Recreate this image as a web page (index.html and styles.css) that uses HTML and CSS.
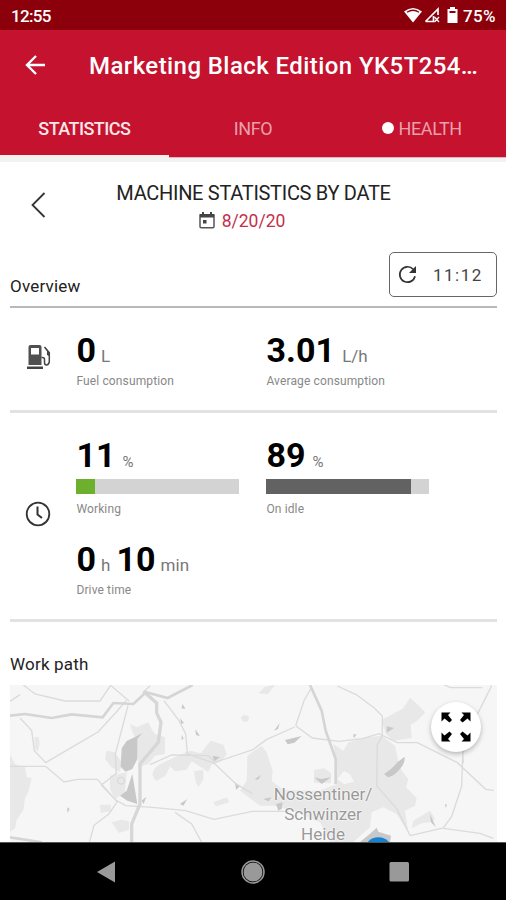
FILE: index.html
```html
<!DOCTYPE html>
<html lang="en">
<head>
<meta charset="utf-8">
<title>Machine statistics</title>
<link rel="stylesheet" href="styles.css">
</head>
<body>
<div class="status">
  <span class="clock">12:55</span>
  <svg class="status-icons" width="58" height="20" viewBox="0 0 58 20" fill="#fff">
    <path d="M0 5.500Q9 -1.500 18 5.500L9 16.500Z"/><path d="M3 6.200Q9 2.300 15 6.200" fill="none" stroke="#8b000b" stroke-width="1.300"/>
    <path d="M21.500 15.500L34 3V9M21.500 15.500H29.500V10" fill="none" stroke="#fff" stroke-width="1.700"/><path d="M30.500 11l4.500 5M35 11l-4.500 5" stroke="#fff" stroke-width="1.300"/>
    <path d="M46 1h5v2h2.500v14h-10V3H46z"/><path d="M45.500 5h6v2h-6z" fill="#8b000b"/>
  </svg>
  <span class="battery">75%</span>
</div>
<header class="header">
  <div class="titlebar">
    <svg class="back" width="22" height="20" viewBox="0 0 22 20" fill="none" stroke="#fff" stroke-width="2.400"><path d="M20 10H2M11 1L2 10l9 9"/></svg>
    <h1 class="title">Marketing Black Edition YK5T254…</h1>
  </div>
  <nav class="tabs">
    <span class="tab tab-active">STATISTICS</span>
    <span class="tab">INFO</span>
    <span class="tab tab-health"><i class="dot"></i>HEALTH</span>
  </nav>
</header>
<main class="content">
  <section class="datebar">
    <svg class="prev" width="15" height="26" viewBox="0 0 15 26" fill="none" stroke="#333" stroke-width="1.800"><path d="M13.500 1L1.500 13l12 12"/></svg>
    <div class="dateinfo">
      <h2 class="heading">MACHINE STATISTICS BY DATE</h2>
      <div class="date">
        <svg width="16" height="17" viewBox="0 0 16 17"><path d="M1 3h14v11.500q0 1.200-1.200 1.200H2.200Q1 15.700 1 14.500z" fill="none" stroke="#555" stroke-width="1.500"/><path d="M1 2h14v3.500H1zM3 0h2v3H3zM11 0h2v3h-2z" fill="#444"/><path d="M4 8h3.500v3.500H4z" fill="#444"/></svg>
        <span class="date-text">8/20/20</span>
      </div>
    </div>
  </section>
  <section class="overview">
    <h3 class="subheading sub-overview">Overview</h3>
    <button class="refresh">
      <svg width="19" height="19" viewBox="0 0 19 19"><path d="M15.200 4.300A7.700 7.700 0 1 0 17 11.200" fill="none" stroke="#333" stroke-width="1.700"/><path d="M18 1v7h-7z" fill="#333"/></svg>
      <span class="time">11:12</span>
    </button>
  </section>
  <section class="row row-fuel">
    <svg class="fuel" width="24" height="25" viewBox="0 0 24 25"><path fill-rule="evenodd" d="M3.500 0h9q2 0 2 2v18h-13V2q0-2 2-2zM4 3v6.500h8V3z" fill="#505050"/><path d="M0 21.500h16v2.500H0z" fill="#444"/><path d="M14.500 12.500h1q2 0 2 2v3q0 2.500 2 2.500t2.800-3V8L17.500 2" fill="none" stroke="#444" stroke-width="1.500"/><path d="M18 2l5 5.500v4l-3-1.500V6z" fill="#444"/></svg>
    <div class="cells">
      <div class="cell"><div class="value"><b>0</b><span class="unit">L</span></div><div class="label">Fuel consumption</div></div>
      <div class="cell"><div class="value"><b>3.01</b><span class="unit u-lh">L/h</span></div><div class="label">Average consumption</div></div>
    </div>
  </section>
  <section class="row row-time">
    <svg class="timeicon" width="26" height="26" viewBox="0 0 26 26" fill="none" stroke="#333" stroke-width="1.800"><circle cx="13" cy="13" r="11.300"/><path d="M12.500 5.500v8l4.500 3.500" stroke-width="2"/></svg>
    <div class="cells">
      <div class="cell"><div class="value"><b>11</b><span class="unit pct">%</span></div><div class="bar"><div class="fill green" style="width:11.500%"></div></div><div class="label">Working</div></div>
      <div class="cell"><div class="value"><b>89</b><span class="unit pct">%</span></div><div class="bar"><div class="fill gray" style="width:89%"></div></div><div class="label">On idle</div></div>
      <div class="cell drive"><div class="value"><b>0</b><span class="unit">h</span><b class="ten">10</b><span class="unit">min</span></div><div class="label">Drive time</div></div>
    </div>
  </section>
  <h3 class="subheading sub-path">Work path</h3>
  <div class="map">
    <svg class="mapdraw" viewBox="30 13 1461 471" preserveAspectRatio="none">
      <path fill="#f6f6f6" d="M30 0h1470v490H30z"/>
      <g fill="#e8e8e8">
        <path d="M30 220l15 30 30 10 5 30 15 3-10 40-10 20-5 35-20 30-5 25-15 10z"/>
        <path d="M390 130l20 10 35-15 10 20 10 15 30 10v50l-30 5-20 25-30 10-5-80-10-20zM320 210l25 5 20 30-5 30-25-15-20-25zM103 170l12-2 4 20-5 25-10-10zM330 285l50-10-5 60-30 20-15-30zM300 372h32v20l-30 5zM335 425l30-8 22 5v25l-30 10z"/>
        <path d="M457 282q5-25 30-35l60-28 25-9 30 8 30-38 38 12 10 28-15 22-30 10-10 22-50-32-15 25-35 5-15-15-15 30-28 14zM582 272l28-5v30l-15 22-8-15zM640 365l40-15 8 15-40 12zM722 112l10-10 15 5-2 15-15 2z"/>
        <path d="M742 225L785 195L800 215L818 270L815 300L850 328L960 330L1010 310L1012 270L1000 190L1030 210L1045 185L1100 170L1145 165L1185 195L1195 240L1205 270L1225 295L1218 320L1250 352L1245 375L1215 390L1225 455L1190 400L1150 380L1115 395L1110 440L1060 484H990L960 425L900 400L830 375L780 375L720 330L740 300Z"/>
        <path d="M1145 118l65-35 20-32 22 20 24 24-24 25-20 12 3 40-53 8-25-20zM1240 420l50-30 15 25-15 10-25 3-30 15zM775 38l20-20 30-5-22 28zM942 268l30-5 22 15-2 30-50-2z"/>
      </g>
      <path d="M1012 295l20-24 18 10 12 22-30 8z" fill="#f6f6f6"/>
      <g fill="#c9c8c9">
        <path d="M427 157l-15 18v60l-15 30-20 8-15-15 3-55 15-22 25-12zM397 280l5 30 10 60-30-10-22-15 20-15z"/>
        <path d="M548 70l8 15-12-2zM540 112l12 15-8 3zM586 146l14 20-12-3zM545 162l6 12-6 4zM638 225l22 5-18 12zM705 305l15 12-12 10zM425 360l14-12-8 22zM540 370l22-15-12 20zM202 380l7 5-7 12z"/>
        <path d="M855 178l50-12-22 20-20 5zM943 290l20 5 30-5-28 20zM1152 280q25-15 40-35l22-17q2 20-15 38-15 20-35 24zM1160 137l22 5-22 14zM822 150l17-23-5 18zM1060 160l10 2-9 10zM764 296l20-14-10 15zM1290 400l18 40-15-15zM1335 370l6 2-4 10zM1080 484l30-25 20-18 5 12 38 12-3 19zM790 355l25-5-10 12zM828 370l20-5-3 20-10 5z"/>
      </g>
      <g fill="none" stroke="#dbdbdb" stroke-width="4">
        <path d="M70 13l35 27 90 21h105l32-47 55 47M60 112l35 38 8 60 34 36 97-57 60-35 55-60 30-35M384 75l-38 145 3 58-45 35 48 50-25 36-45 35-14 52M30 257h107l55 47 40-8h60l55 62 30 17 80 5 100 10 85 26 115-24h110M492 60l45 60 20 40 5 60 80 27 65 62 50 30M450 252l65-29 110 2 20 20 114-38M525 395l50 35 30 55M430 35l20-20M30 62l30-20"/>
        <path d="M759 207l40-30 85-38M887 135l50 37 80 10 70-8 50-15 55 27h60l120 60 85 80 25 3M887 135l25-75 20-35M1012 16l55 25 55 40 25 25v60l-15 25-2 125 60 68 40 80M1390 247l-2-30 18-34M1430 105l45-90M1388 227l-3 90-30 90-25 35-100 23M1330 443l110 15 40 15M1332 13l20 8h95"/>
        <circle cx="363" cy="300" r="10"/>
      </g>
      <path d="M30 105l45-5 80 12 60-11 93 9 32-43 60 3 38-35 65 17 75-39M30 470l95 15" fill="none" stroke="#d5d5d5" stroke-width="8"/>
      <path d="M430 32l40 35v30l13 28-8 60-55 65v120l-25 60v70" fill="none" stroke="#d8d7d8" stroke-width="10"/>
      <path d="M930 13l35 77 12 60 30 85v75" fill="none" stroke="#d5d5d5" stroke-width="8"/>
      <circle cx="1135" cy="513" r="43" fill="#1482d2"/>
    </svg>
    <div class="place">Nossentiner/<br>Schwinzer<br>Heide</div>
    <div class="expand"><svg width="30" height="30" viewBox="0 0 30 30" fill="#000"><g id="arrow"><path d="M.5.500h9L7 3l4 5-2.500 2.500L3.500 6.500.5 9.500z"/></g><use href="#arrow" transform="matrix(-1 0 0 1 30 0)"/><use href="#arrow" transform="matrix(1 0 0 -1 0 30)"/><use href="#arrow" transform="rotate(180 15 15)"/></svg></div>
  </div>
</main>
<footer class="navbar">
  <svg class="nav-icon" width="24" height="24" viewBox="0 0 24 24"><path d="M2 12L20 1.500v21z" fill="#999"/></svg>
  <svg class="nav-icon" width="24" height="24" viewBox="0 0 24 24"><circle cx="12" cy="12" r="11" fill="none" stroke="#999" stroke-width="1.500"/><circle cx="12" cy="12" r="9.500" fill="#999"/></svg>
  <svg class="nav-icon" width="24" height="24" viewBox="0 0 24 24"><rect x="2.500" y="2" width="19.500" height="19.500" rx="1.500" fill="#999"/></svg>
</footer>
</body>
</html>
```
FILE: styles.css
```css
* { box-sizing: border-box; }
body { margin: 0; width: 506px; height: 900px; overflow: hidden; display: flex; flex-direction: column; background: #fff; color: #222; font-family: Roboto, "Liberation Sans", sans-serif; }
h1, h2, h3 { margin: 0; font-weight: 400; }
svg { display: block; flex: none; }
.status { height: 30px; flex: none; background: #8b000b; color: #fff; display: flex; align-items: center; padding: 2px 9px 0 11px; font-size: 17px; font-weight: 500; }
.clock { flex: 1; letter-spacing: -0.700px; }
.status-icons { margin-right: 1px; }
.battery { width: 34px; white-space: nowrap; letter-spacing: 0.300px; }
.header { height: 128px; flex: none; background: #c4122f; color: #fff; display: flex; flex-direction: column; border-bottom: 1px solid #dfb8bd; }
.titlebar { height: 70px; display: flex; align-items: center; padding-left: 25px; }
.title { margin-left: 42px; padding-top: 1px; font-size: 24px; font-weight: 500; white-space: nowrap; letter-spacing: 0.420px; }
.tabs { flex: 1; display: grid; grid-template-columns: repeat(3, 1fr); margin-bottom: -1px; }
.tab { display: flex; align-items: center; justify-content: center; font-size: 18px; letter-spacing: -0.400px; color: #eba0aa; font-weight: 400; padding-top: 1px; border-bottom: 3px solid transparent; }
.tab-active { color: #fbe6e8; border-bottom-color: #f8eeee; font-weight: 500; letter-spacing: -0.550px; }
.dot { width: 12px; height: 12px; border-radius: 50%; background: #fff; margin-right: 5px; }
.content { flex: 1; min-height: 0; padding: 0 9px 0 10px; border-top: 4px solid #f2f2f2; overflow: hidden; }
.datebar { height: 90px; display: flex; padding: 19px 0 0 21px; }
.prev { margin-top: 11px; }
.dateinfo { flex: 1; padding-right: 36px; display: flex; flex-direction: column; align-items: center; }
.heading { font-size: 20px; line-height: 24px; white-space: nowrap; letter-spacing: -0.300px; }
.date { display: flex; align-items: center; gap: 7px; margin: 4px 23px 0 0; line-height: 24px; font-size: 17.500px; color: #c4304a; }
.date svg { margin-bottom: 2px; }
.overview { height: 56px; display: flex; justify-content: space-between; border-bottom: 2px solid #b9b9b9; }
.subheading { font-size: 17px; line-height: 20px; letter-spacing: 0.200px; }
.sub-overview { margin-top: 24px; }
.refresh { width: 108px; height: 45px; border: 1.500px solid #666; border-radius: 5px; background: #fff; padding: 0 0 0 8px; display: flex; align-items: center; gap: 16px; font: 400 17px Roboto, sans-serif; color: #444; }
.time { letter-spacing: 1.500px; }
.row { display: flex; border-bottom: 3px solid #e2e2e2; }
.row-fuel { height: 105px; }
.row-time { height: 209px; }
.fuel { margin: 37px 25px 0 17px; }
.timeicon { margin: 88px 25px 0 15px; }
.cells { display: grid; grid-template-columns: 190px 163px; align-content: start; padding-top: 22px; padding-left: .400px; row-gap: 23px; }
.row-fuel .label { margin-top: 4px; }
.value { height: 40px; line-height: 40px; display: flex; align-items: baseline; color: #000; white-space: nowrap; }
.value b { font-size: 34px; font-weight: 700; letter-spacing: 0.100px; }
.unit { font-size: 17px; color: #777; margin-left: 5px; }
.u-lh { margin-left: 7px; }
.label { font-size: 12px; line-height: 14px; letter-spacing: 0.130px; color: #888; margin-top: 2px; white-space: nowrap; }
.bar { width: 163px; height: 15px; background: #d3d3d3; margin: 4px 0 8px; }
.fill { height: 15px; }
.green { background: #6db02d; }
.gray { background: #626262; }
.pct { font-size: 15px; margin-left: 7px; }
.drive .label { margin-top: 4px; }
.ten { margin-left: 6px; }
.sub-path { margin-top: 32px; }
.map { position: relative; height: 157px; margin-top: 11px; overflow: hidden; }
.mapdraw { width: 487px; height: 157px; }
.place { position: absolute; left: 248px; top: 99px; width: 130px; text-align: center; font-size: 17px; line-height: 20px; color: #999; text-shadow: 0 0 2px #fff, 0 0 2px #fff; }
.expand { position: absolute; left: 421px; top: 17px; width: 50px; height: 50px; border-radius: 50%; background: #fff; box-shadow: 0 2px 5px #0004; display: flex; align-items: center; justify-content: center; }
.navbar { height: 58px; flex: none; background: #000; display: flex; align-items: center; justify-content: center; gap: 122px; border-top: 1px solid #555; }
```
